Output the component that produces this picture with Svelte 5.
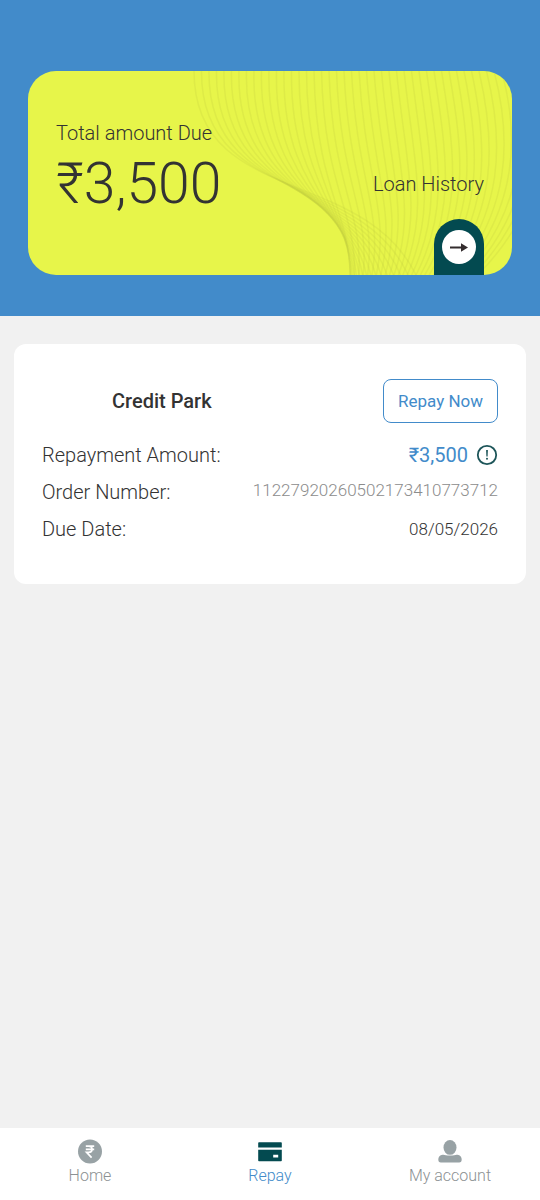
<script>
    const summary = { total: '₹3,500' }

    const loan = {
        name: 'Credit Park',
        amount: '₹3,500',
        orderNumber: '11227920260502173410773712',
        dueDate: '08/05/2026'
    }

    const tabs = [
        { id: 'home', label: 'Home' },
        { id: 'repay', label: 'Repay' },
        { id: 'account', label: 'My account' }
    ]
    let activeTab = $state('repay')

    // thin curves fanning out behind the card content
    function buildWave(i) {
        const start = 166 + i * 7.5
        if (i <= 16) {
            const f = i / 16
            const ease = 1 - (1 - f) * (1 - f)
            const bend = f * (1 - f)
            return `M${start} 0C${start + 2 * f - 20 * bend} ${135 - 15 * f} ${335 - 13 * f - 20 * bend} ${95 + 45 * f + 30 * bend} ${388 - 66 * ease} 204`
        }
        const g = i - 16
        return `M${start} 0C${start + 2 + 0.7 * g} ${120 - 2 * g} ${322 + 6.6 * g} 140 ${322 + 4.4 * g} 204`
    }
    const waves = Array.from({ length: 46 }, (_, i) => buildWave(i))
</script>

<div class="page">
    <header>
        <section class="total-card">
            <svg class="waves" viewBox="0 0 484 204" preserveAspectRatio="xMaxYMid slice" aria-hidden="true">
                {#each waves as d}
                    <path {d} />
                {/each}
            </svg>
            <div class="total">
                <p>Total amount Due</p>
                <strong>{summary.total}</strong>
            </div>
            <a class="history" href="#history">
                <span>Loan History</span>
                <span class="arch">
                    <svg width="34" height="34" viewBox="0 0 34 34" aria-hidden="true">
                        <circle cx="17" cy="17" r="17" fill="#fff" />
                        <path d="M8 17.5h12" stroke="#332c2e" stroke-width="2" />
                        <path d="M19 13.2l7 4.3-7 4.3z" fill="#332c2e" />
                    </svg>
                </span>
            </a>
        </section>
    </header>

    <main>
        <section class="loan-card">
            <div class="loan-head">
                <h2>{loan.name}</h2>
                <button class="repay-button">Repay Now</button>
            </div>
            <dl>
                <div class="row">
                    <dt>Repayment Amount:</dt>
                    <dd class="amount">
                        {loan.amount}
                        <button class="info" aria-label="Repayment details">
                            <svg width="22" height="22" viewBox="0 0 22 22" aria-hidden="true">
                                <circle cx="11" cy="11" r="9.2" fill="none" stroke="#1d5559" stroke-width="1.8" />
                                <path d="M10.1 6h1.8l-.3 6.4h-1.2z" fill="#1d5559" />
                                <circle cx="11" cy="14.8" r="1" fill="#1d5559" />
                            </svg>
                        </button>
                    </dd>
                </div>
                <div class="row">
                    <dt>Order Number:</dt>
                    <dd class="order">{loan.orderNumber}</dd>
                </div>
                <div class="row">
                    <dt>Due Date:</dt>
                    <dd>{loan.dueDate}</dd>
                </div>
            </dl>
        </section>
    </main>

    <nav>
        {#each tabs as tab}
            <button class="tab" class:active={activeTab === tab.id} onclick={() => activeTab = tab.id}>
                <svg width="26" height="26" viewBox="0 0 26 26" aria-hidden="true">
                    {#if tab.id === 'home'}
                        <circle cx="13" cy="12.6" r="12" />
                        <path class="rupee" d="M8.8 7.2h8.4M8.8 10.4h8.4M9 7.2h2.6c4.6 0 4.6 6.2 0 6.2H9.6l5 5.2" />
                    {:else if tab.id === 'repay'}
                        <path d="M2 3.2h22a.8.8 0 0 1 .8.8v4.6H1.2V4a.8.8 0 0 1 .8-.8z" />
                        <path fill-rule="evenodd" d="M1.2 10.8h23.6v10.6a.8.8 0 0 1-.8.8H2a.8.8 0 0 1-.8-.8zM16.2 15.8v2.6h5v-2.6z" />
                    {:else}
                        <ellipse cx="13" cy="8.4" rx="6.5" ry="7.4" />
                        <path d="M5.5 15.8c2-.4 3.2.8 7.500.8s5.500-1.200 7.500-.8c2.600.5 4.200 2.300 4.200 4.500 0 2.200-.8 3.300-2.600 3.300H3.900c-1.800 0-2.600-1.100-2.600-3.300 0-2.200 1.600-4 4.200-4.500z" />
                    {/if}
                </svg>
                <span>{tab.label}</span>
            </button>
        {/each}
    </nav>
</div>

<style>
    :global(body) {
        margin: 0;
        background: #f1f1f1;
    }

    .page {
        display: flex;
        flex-direction: column;
        min-height: 100vh;
        font-family: Roboto, "Noto Sans", sans-serif;
        font-weight: 300;
        font-size: 20px;
        line-height: 24px;
        color: #333;
    }

    button {
        font: inherit;
        background: none;
        border: none;
        padding: 0;
        cursor: pointer;
    }

    header {
        padding: 71px 28px 41px;
        background: #428bca;
    }

    .total-card {
        position: relative;
        display: flex;
        justify-content: space-between;
        min-height: 204px;
        border-radius: 28px;
        background: #e7f54a;
        overflow: hidden;
    }

    .waves {
        position: absolute;
        inset: 0;
        width: 100%;
        height: 100%;
        fill: none;
        stroke: #b8c23c;
        stroke-width: 1.5;
        stroke-opacity: 0.18;
    }

    .total {
        position: relative;
        padding: 50px 0 0 28px;
    }

    .total p {
        margin: 0;
    }

    .total strong {
        display: block;
        font-size: 57px;
        font-weight: 300;
        line-height: 78px;
    }

    .history {
        position: relative;
        display: flex;
        flex-direction: column;
        justify-content: flex-end;
        align-items: flex-end;
        gap: 23px;
        padding-right: 28px;
        color: inherit;
        text-decoration: none;
    }

    .arch {
        display: flex;
        justify-content: center;
        box-sizing: border-box;
        width: 50px;
        height: 56px;
        padding-top: 11px;
        border-radius: 25px 25px 0 0;
        background: #034a50;
    }

    main {
        flex: 1;
        padding: 28px 14px;
    }

    .loan-card {
        padding: 35px 28px 43px;
        border-radius: 12px;
        background: #fff;
    }

    .loan-head {
        display: flex;
        justify-content: space-between;
        align-items: center;
        padding-left: 70px;
    }

    h2 {
        margin: 0;
        font-size: 20px;
        font-weight: 500;
    }

    .repay-button {
        height: 44px;
        padding: 0 14px;
        border: 1px solid #428bca;
        border-radius: 8px;
        font-size: 17px;
        font-weight: 400;
        color: #428bca;
    }

    dl {
        display: flex;
        flex-direction: column;
        gap: 13px;
        margin: 20px 0 0;
    }

    .row {
        display: flex;
        justify-content: space-between;
    }

    dd {
        margin: 0;
        font-size: 17px;
    }

    .amount {
        display: flex;
        align-items: center;
        gap: 8px;
        font-size: 20px;
        font-weight: 400;
        color: #428bca;
    }

    .info {
        display: flex;
    }

    .order {
        line-height: 20px;
        color: #8c8c8c;
    }

    nav {
        display: flex;
        background: #fff;
    }

    .tab {
        display: flex;
        flex: 1;
        flex-direction: column;
        align-items: center;
        padding: 11px 0 13px;
        font-size: 16px;
        line-height: 22px;
        color: #8c9193;
    }

    .tab svg {
        fill: #98a2a5;
    }

    .tab.active {
        color: #428bca;
    }

    .tab.active svg {
        fill: #034a50;
    }

    .rupee {
        fill: none;
        stroke: #fff;
        stroke-width: 1.7;
    }
</style>
